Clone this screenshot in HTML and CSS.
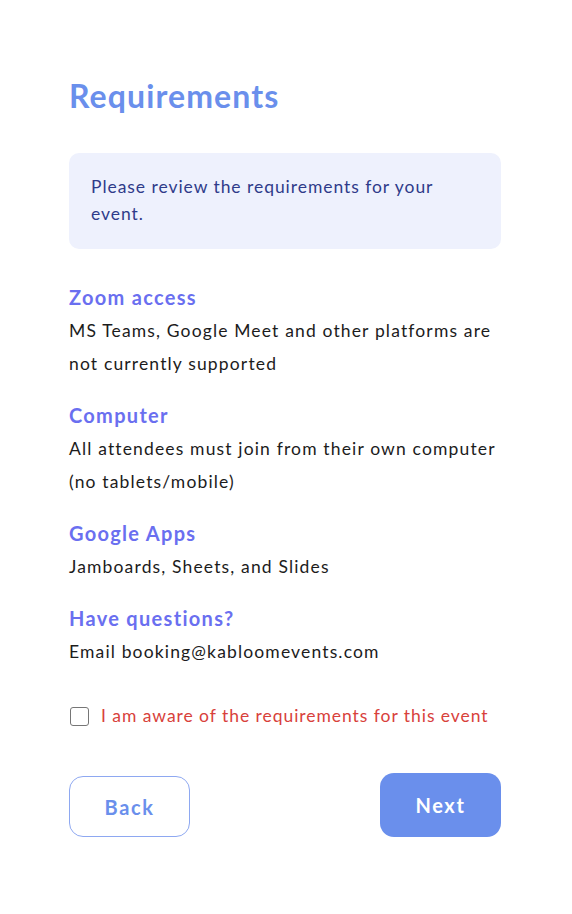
FILE: index.html
```html
<!DOCTYPE html>
<html lang="en">
<head>
<meta charset="utf-8">
<title>Requirements</title>
<link rel="stylesheet" href="styles.css">
</head>
<body>
<main class="page">
  <h1 class="title">Requirements</h1>
  <div class="notice">Please review the requirements for your event.</div>
  <section class="req">
    <h2 class="req-title">Zoom access</h2>
    <p class="req-text">MS Teams, Google Meet and other platforms are not currently supported</p>
  </section>
  <section class="req">
    <h2 class="req-title">Computer</h2>
    <p class="req-text">All attendees must join from their own computer (no tablets/mobile)</p>
  </section>
  <section class="req">
    <h2 class="req-title">Google Apps</h2>
    <p class="req-text">Jamboards, Sheets, and Slides</p>
  </section>
  <section class="req">
    <h2 class="req-title">Have questions?</h2>
    <p class="req-text">Email booking@kabloomevents.com</p>
  </section>
  <label class="agree">
    <span class="box"></span>
    <span class="agree-text">I am aware of the requirements for this event</span>
  </label>
  <div class="actions">
    <button class="btn btn-back">Back</button>
    <button class="btn btn-next">Next</button>
  </div>
</main>
</body>
</html>
```
FILE: styles.css
```css
* { box-sizing: border-box; }
html, body { margin: 0; padding: 0; background: #fff; }
body { font-family: "Lato", "Open Sans", sans-serif; color: #1c1c1c; }
.page {
  width: 572px;
  padding: 78px 71px 0 69px;
  display: flex;
  flex-direction: column;
}
.title {
  margin: 0;
  font-size: 32px;
  line-height: 36px;
  font-weight: 700;
  letter-spacing: 1.1px;
  color: #6a8fec;
}
.notice {
  margin-top: 39px;
  background: #eef1fd;
  border-radius: 10px;
  padding: 20px 50px 22px 22px;
  font-size: 17.5px;
  line-height: 27px;
  letter-spacing: 0.95px;
  color: #2f3b8a;
}
.req { margin-top: 33px; }
.req + .req { margin-top: 20px; }
.req-title {
  margin: 0 0 2px;
  font-size: 20px;
  line-height: 30px;
  font-weight: 700;
  letter-spacing: 1.3px;
  color: #6a6ff0;
}
.req-text {
  margin: 0;
  font-size: 17.5px;
  line-height: 33px;
  letter-spacing: 1.15px;
  color: #1c1c1c;
}
.agree {
  margin-top: 36px;
  display: flex;
  align-items: center;
  gap: 12px;
  padding-left: 1px;
}
.box {
  width: 19px;
  height: 19px;
  border: 1.5px solid #767676;
  border-radius: 3px;
  flex: none;
}
.agree-text {
  font-size: 17.5px;
  line-height: 24px;
  letter-spacing: 0.95px;
  color: #d8413b;
}
.actions {
  margin-top: 45px;
  display: flex;
  justify-content: space-between;
  align-items: flex-end;
}
.btn {
  width: 121px;
  border-radius: 14px;
  font-family: inherit;
  font-size: 20px;
  font-weight: 700;
  letter-spacing: 1.6px;
  cursor: pointer;
}
.btn-back {
  height: 61px;
  background: #fff;
  border: 1px solid #8ea8f1;
  color: #6a8fec;
}
.btn-next {
  height: 64px;
  background: #6a8fec;
  border: none;
  color: #fff;
}
```
